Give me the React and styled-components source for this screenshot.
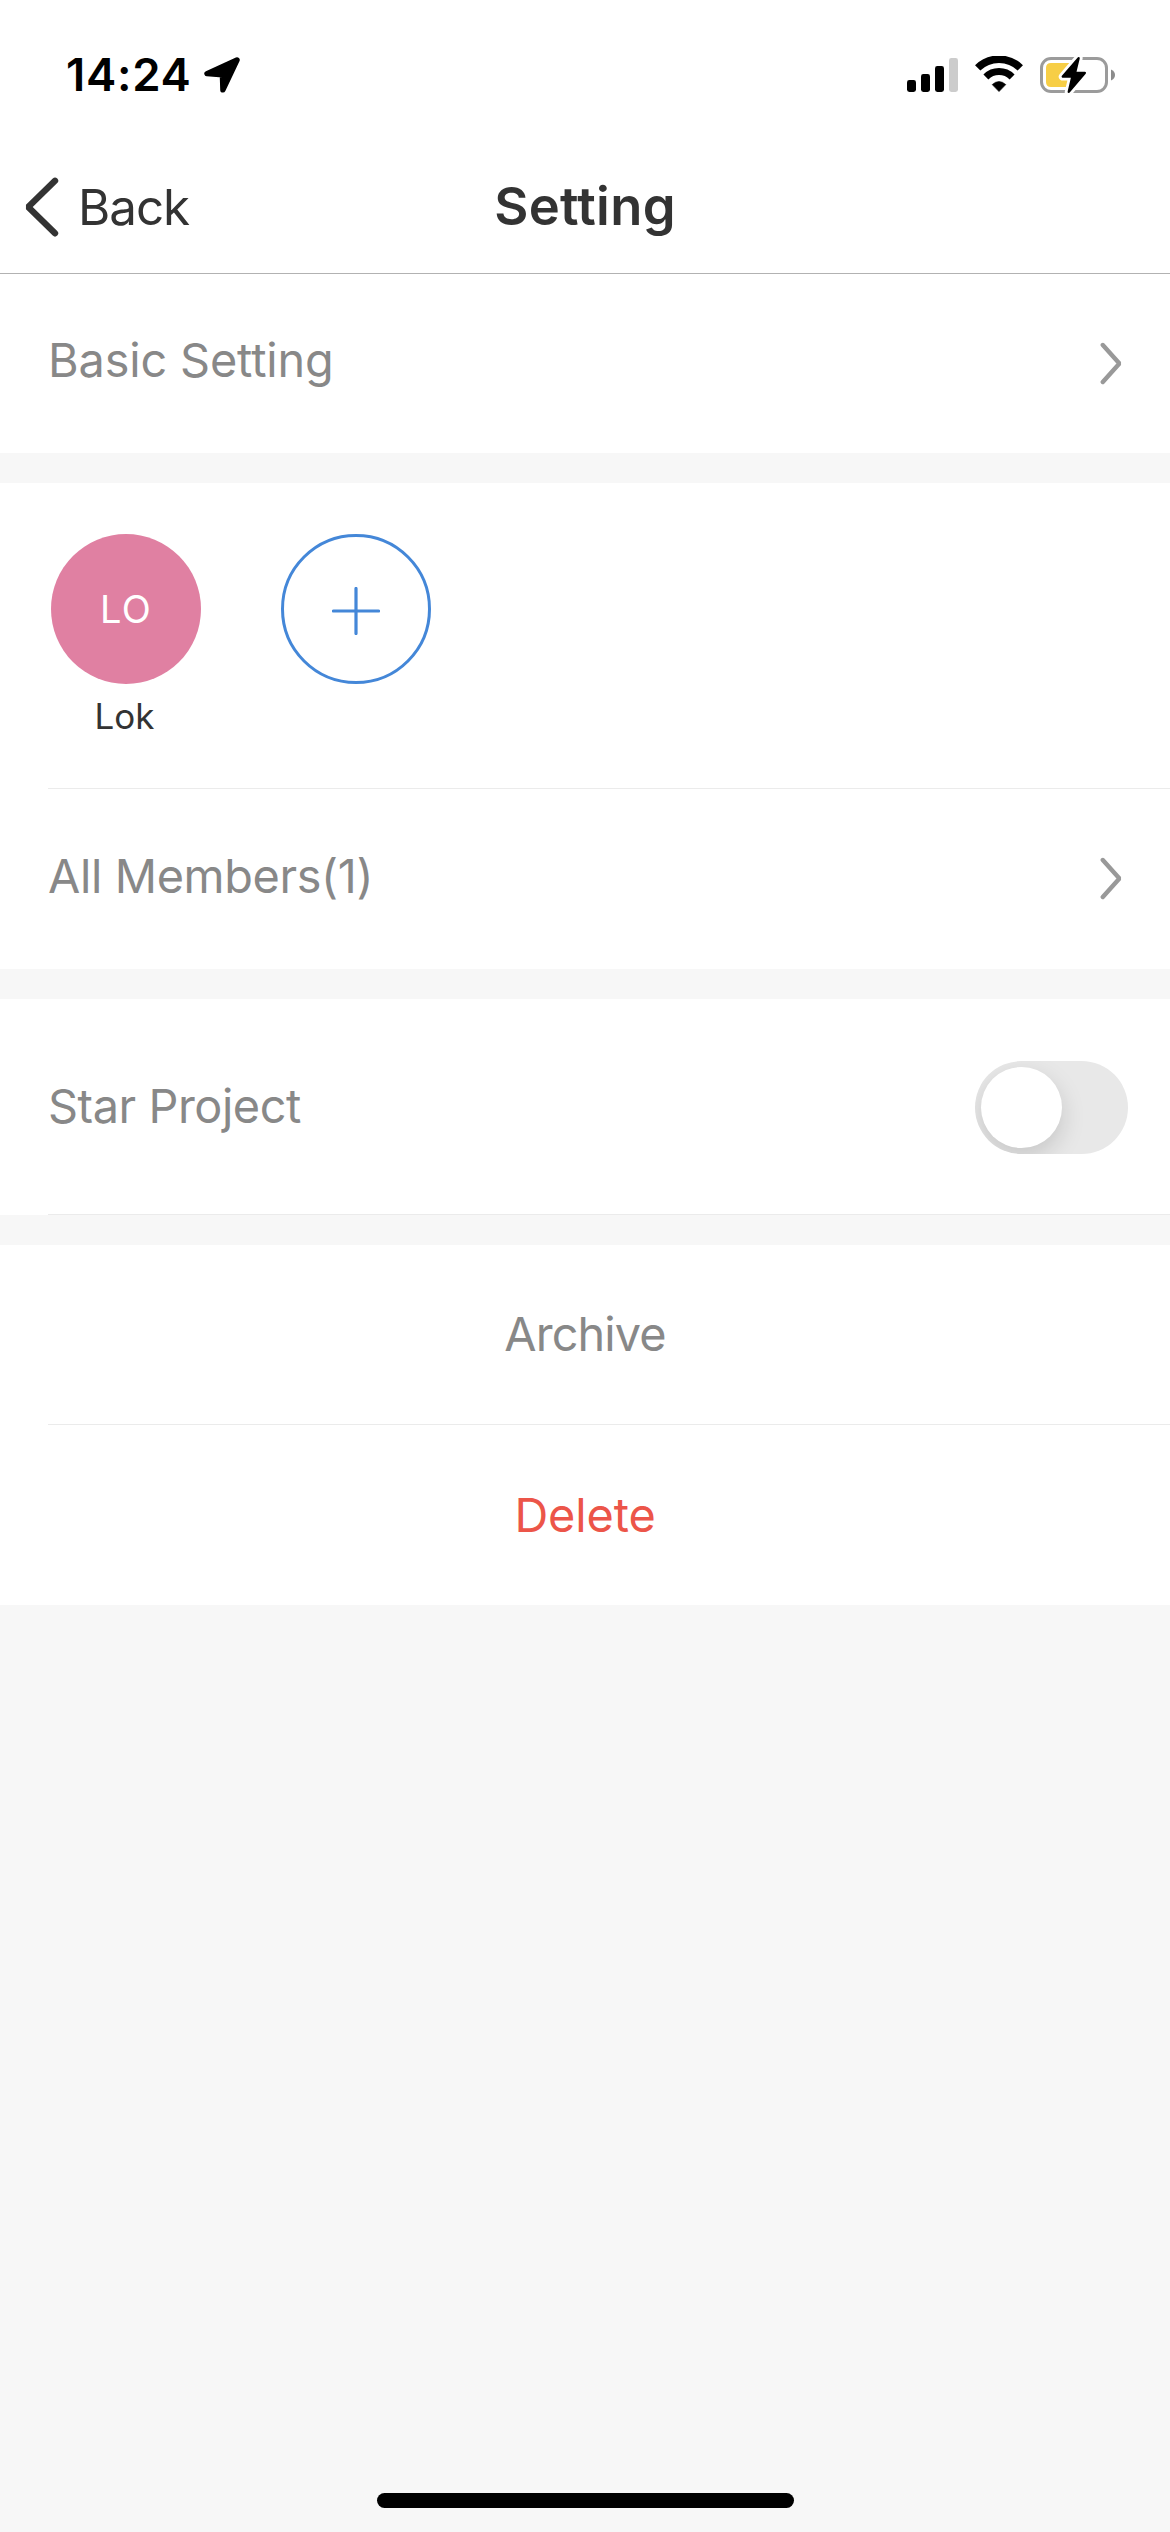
import React, { useState } from "react";
import styled, { createGlobalStyle } from "styled-components";

const GlobalStyle = createGlobalStyle`
  *, *::before, *::after { box-sizing: border-box; }
  body {
    margin: 0;
    background: #f7f7f7;
    font-family: Inter, "Liberation Sans", sans-serif;
    color: #333;
  }
  button { margin: 0; padding: 0; border: 0; background: none; font: inherit; color: inherit; }
  svg { display: block; flex: none; }
`;

const Screen = styled.div`
  display: flex;
  flex-direction: column;
  width: 1170px;
  height: 2532px;
  background: #f7f7f7;
`;

const StatusBar = styled.div`
  display: flex;
  align-items: center;
  justify-content: space-between;
  height: 141px;
  padding: 8px 54px 0 66px;
  background: #fff;
  color: #000;
`;

const StatusGroup = styled.div`
  display: flex;
  align-items: center;
  gap: ${(p) => p.$gap}px;
`;

const Time = styled.span`
  font-size: 45.5px;
  font-weight: 600;
  line-height: 55px;
  letter-spacing: 0.7px;
`;

const NavBar = styled.header`
  display: grid;
  grid-template-columns: 1fr auto 1fr;
  align-items: center;
  height: 133px;
  padding: 0 24px;
  border-bottom: 1px solid #b2b2b2;
  background: #fff;
`;

const BackButton = styled.button`
  display: flex;
  align-items: center;
  gap: 18px;
  justify-self: start;
  font-size: 49.3px;
  line-height: 60px;
  letter-spacing: -1px;
`;

const Title = styled.h1`
  margin: 0;
  padding-bottom: 2px;
  font-size: 52.5px;
  font-weight: 600;
  line-height: 64px;
  letter-spacing: 0.34px;
`;

const List = styled.main`
  display: flex;
  flex-direction: column;
  gap: 30px;
`;

const Section = styled.section`
  display: flex;
  flex-direction: column;
  background: #fff;
`;

const Divider = styled.hr`
  width: 1122px;
  height: 1px;
  margin: 0 0 0 48px;
  border: 0;
  background: #ebebeb;
`;

const Row = styled.div`
  display: flex;
  align-items: center;
  justify-content: space-between;
  height: ${(p) => p.$height}px;
  padding: 0 ${(p) => p.$end}px 0 48px;
`;

const Label = styled.span`
  padding-bottom: ${(p) => p.$lift || 0}px;
  font-size: 46.8px;
  line-height: 57px;
  letter-spacing: ${(p) => p.$spacing}px;
  color: #888;
`;

const ActionButton = styled.button`
  height: ${(p) => p.$height}px;
  font-size: 46.8px;
  line-height: 57px;
  letter-spacing: ${(p) => p.$spacing}px;
  text-align: center;
  color: ${(p) => (p.$danger ? "#ec5549" : "#888")};
`;

const Members = styled.div`
  display: flex;
  align-items: flex-start;
  gap: 80px;
  height: 305px;
  padding: 51px 51px 0;
`;

const Member = styled.div`
  display: flex;
  flex-direction: column;
  align-items: center;
  gap: 12px;
`;

const Avatar = styled.div`
  display: flex;
  align-items: center;
  justify-content: center;
  width: 150px;
  height: 150px;
  border-radius: 50%;
  background: #e080a2;
  color: #fff;
  font-size: 38px;
  letter-spacing: 1.2px;
`;

const MemberName = styled.span`
  padding-right: 3px;
  font-size: 35px;
  line-height: 40px;
`;

const AddButton = styled.button`
  display: flex;
  align-items: center;
  justify-content: center;
  width: 150px;
  height: 150px;
  padding-top: 3px;
  border: 3px solid #4487d8;
  border-radius: 50%;
`;

const Switch = styled.button`
  display: flex;
  align-items: center;
  justify-content: ${(p) => (p.$on ? "flex-end" : "flex-start")};
  width: 153px;
  height: 93px;
  margin-top: 2px;
  padding: 6px;
  border-radius: 47px;
  overflow: hidden;
  background: ${(p) => (p.$on ? "#34c759" : "#e8e8e8")};
`;

const Knob = styled.span`
  width: 81px;
  height: 81px;
  border-radius: 50%;
  background: #fff;
  box-shadow: 0 9px 24px rgba(0, 0, 0, 0.15);
`;

const Footer = styled.footer`
  display: flex;
  justify-content: center;
  margin-top: auto;
  padding-bottom: 24px;
`;

const HomeIndicator = styled.div`
  width: 417px;
  height: 15px;
  border-radius: 8px;
  background: #000;
`;

const LocationIcon = () => (
  <svg width="36" height="36" viewBox="0 0 36 36">
    <path
      d="M33 3 L3 16.6 L18.4 17.7 L18.9 32.8 Z"
      fill="#000"
      stroke="#000"
      strokeWidth="5.4"
      strokeLinejoin="round"
    />
  </svg>
);

const SignalIcon = () => (
  <svg width="51" height="36" viewBox="0 0 51 36">
    <rect x="0" y="23" width="9" height="12" rx="2.4" />
    <rect x="14" y="17" width="9" height="18" rx="2.4" />
    <rect x="28" y="9" width="9" height="26" rx="2.4" />
    <rect x="42" y="1" width="9" height="34" rx="2.4" fill="#ccc" />
  </svg>
);

const WifiIcon = () => (
  <svg width="48" height="37" viewBox="0 0 48 37">
    <path d="M2.7 11.9 A30.5 30.5 0 0 1 45.3 11.9" fill="none" stroke="#000" strokeWidth="7.6" />
    <path d="M10.9 21 A18.6 18.6 0 0 1 37.1 21" fill="none" stroke="#000" strokeWidth="7" />
    <path d="M24 35.6 L17.2 28.6 Q24 22.4 30.8 28.6 Z" fill="#000" stroke="#000" strokeWidth="0.6" strokeLinejoin="round" />
  </svg>
);

const BatteryIcon = () => (
  <svg width="76" height="38" viewBox="0 0 76 38">
    <rect x="1.5" y="2.5" width="65" height="33" rx="9.5" fill="none" stroke="#9b9b9b" strokeWidth="3" />
    <path d="M71 13.4 Q75 15.2 75 19 Q75 22.8 71 24.6 Z" fill="#8c8c8c" />
    <path d="M11 7 H30 V31 H11 Q6 31 6 26 V12 Q6 7 11 7 Z" fill="#f7ce46" />
    <path
      d="M38.6 2.2 L22.8 20.6 H32.4 L28.8 35.8 L44.8 16.9 H35 Z"
      fill="#fff"
      stroke="#fff"
      strokeWidth="8"
      strokeLinejoin="round"
    />
    <path
      d="M38.6 2.2 L22.8 20.6 H32.4 L28.8 35.8 L44.8 16.9 H35 Z"
      fill="#000"
      stroke="#000"
      strokeWidth="2.4"
      strokeLinejoin="round"
    />
  </svg>
);

const BackIcon = () => (
  <svg width="36" height="60" viewBox="0 0 36 60" fill="none">
    <path d="M31 3.8 L4.2 30 L31 56.3" stroke="#333" strokeWidth="6.4" strokeLinecap="round" strokeLinejoin="bevel" />
  </svg>
);

const ChevronIcon = () => (
  <svg width="24" height="44" viewBox="0 0 24 44" fill="none">
    <path d="M3.8 3 L20.4 21.5 L3.8 40" stroke="#999" strokeWidth="4.4" strokeLinecap="round" strokeLinejoin="bevel" />
  </svg>
);

const PlusIcon = () => (
  <svg width="48" height="48" viewBox="0 0 48 48" fill="none">
    <path d="M24 1.5 V46.5 M1.5 24 H46.5" stroke="#4487d8" strokeWidth="3.2" strokeLinecap="round" />
  </svg>
);

const NavRow = ({ children, spacing, lift, height }) => (
  <Row $height={height} $end={47}>
    <Label $spacing={spacing} $lift={lift}>{children}</Label>
    <ChevronIcon />
  </Row>
);

export default function App() {
  const [starred, setStarred] = useState(false);

  return (
    <Screen>
      <GlobalStyle />
      <StatusBar>
        <StatusGroup $gap={12.5}>
          <Time>14:24</Time>
          <LocationIcon />
        </StatusGroup>
        <StatusGroup $gap={17}>
          <SignalIcon />
          <WifiIcon />
          <BatteryIcon />
        </StatusGroup>
      </StatusBar>

      <NavBar>
        <BackButton>
          <BackIcon />
          Back
        </BackButton>
        <Title>Setting</Title>
      </NavBar>

      <List>
        <Section>
          <NavRow height={179} spacing={-0.13} lift={6}>Basic Setting</NavRow>
        </Section>

        <Section>
          <Members>
            <Member>
              <Avatar>LO</Avatar>
              <MemberName>Lok</MemberName>
            </Member>
            <AddButton aria-label="Add member">
              <PlusIcon />
            </AddButton>
          </Members>
          <Divider />
          <NavRow height={180} spacing={-0.35} lift={6}>All Members(1)</NavRow>
        </Section>

        <Section>
          <Row $height={215} $end={42}>
            <Label $spacing={-0.43}>Star Project</Label>
            <Switch
              role="switch"
              aria-checked={starred}
              aria-label="Star Project"
              $on={starred}
              onClick={() => setStarred(!starred)}
            >
              <Knob />
            </Switch>
          </Row>
          <Divider />
        </Section>

        <Section>
          <ActionButton $height={179} $spacing={-0.88}>Archive</ActionButton>
          <Divider />
          <ActionButton $height={180} $spacing={-0.1} $danger>Delete</ActionButton>
        </Section>
      </List>

      <Footer>
        <HomeIndicator />
      </Footer>
    </Screen>
  );
}
